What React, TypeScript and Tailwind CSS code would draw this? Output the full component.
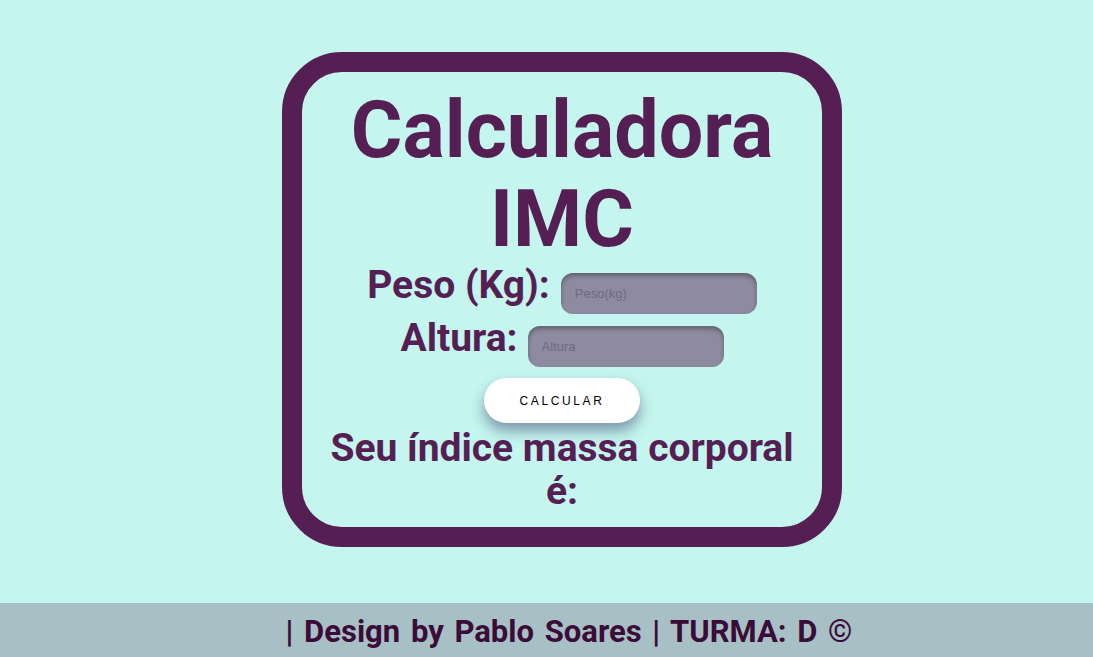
import React from "react";

const font = { fontFamily: 'Roboto, "Liberation Sans", sans-serif' };
const arial = { fontFamily: '"Liberation Sans", Arial, sans-serif' };

export default function App() {
  return (
    <div className="min-h-[657px] w-full bg-[#c4f5ee] flex flex-col" style={font}>
      <main className="flex-1 flex justify-center pt-[52px] pl-[31px]">
        <div className="w-[560px] h-[495px] border-[20px] border-[#561f54] rounded-[60px] flex flex-col items-center text-[#561f54] font-bold">
          <h1 className="text-[79px] leading-[89px] text-center mt-[14px]">Calculadora<br />IMC</h1>
          <div className="flex h-[53px] gap-[11px] mt-[-5px]">
            <span className="text-[39px] leading-[53px]">Peso (Kg):</span>
            <input placeholder="Peso(kg)" className="mt-[14px] w-[196px] h-[41px] rounded-[12px] bg-[#8e8a9f] px-[14px] text-[13px] font-normal text-black placeholder:text-[#6f6b7f] shadow-[inset_0_3px_4px_rgba(0,0,0,0.3)] outline-none" style={arial} />
          </div>
          <div className="flex h-[53px] gap-[10px]">
            <span className="text-[39px] leading-[53px]">Altura:</span>
            <input placeholder="Altura" className="mt-[14px] w-[196px] h-[41px] rounded-[12px] bg-[#8e8a9f] px-[14px] text-[13px] font-normal text-black placeholder:text-[#6f6b7f] shadow-[inset_0_3px_4px_rgba(0,0,0,0.3)] outline-none" style={arial} />
          </div>
          <button className="mt-[13px] w-[156px] h-[45px] rounded-full bg-white text-black text-[12px] font-normal tracking-[2.6px] shadow-[0_8px_14px_rgba(40,40,90,0.45)]" style={arial}>CALCULAR</button>
          <p className="text-[39px] leading-[43px] text-center mt-[4px]">Seu índice massa corporal<br />é:</p>
        </div>
      </main>
      <footer className="h-[54px] bg-[#a7c0c6] flex items-center justify-center pl-[45px] pt-[5px] text-[#3b0c37] text-[31px] font-bold [word-spacing:3px]" style={font}>
        | Design by Pablo Soares | TURMA: D ©
      </footer>
    </div>
  );
}
